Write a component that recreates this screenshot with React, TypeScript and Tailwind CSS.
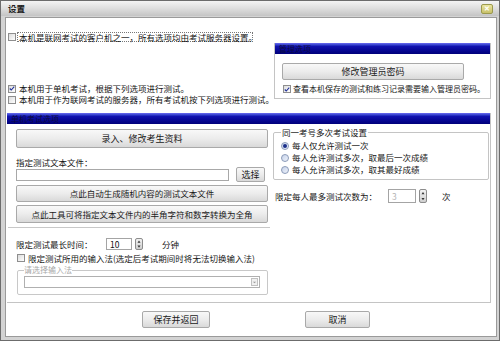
import type { ReactNode } from 'react'

const font = { fontFamily: '"Noto Sans CJK SC", "Noto Sans", sans-serif' }

function Btn({ children, className = '' }: { children: ReactNode; className?: string }) {
  return (
    <div
      className={`flex items-center justify-center whitespace-nowrap rounded-[2px] border border-[#a9a9a9] bg-gradient-to-b from-[#f8f8f8] via-[#ececec] to-[#d9d9d9] text-[#1a1a1a] ${className}`}
    >
      {children}
    </div>
  )
}

function Check({ checked = false }: { checked?: boolean }) {
  return (
    <span className="flex h-[8px] w-[8px] shrink-0 items-center justify-center border border-[#8e8e8e] bg-gradient-to-br from-[#dcdcdc] to-white">
      {checked && (
        <svg viewBox="0 0 8 8" className="h-[7px] w-[7px]">
          <path d="M1 4 L3 6 L7 1.5" stroke="#23339a" strokeWidth="1.5" fill="none" />
        </svg>
      )}
    </span>
  )
}

function Radio({ on = false }: { on?: boolean }) {
  return (
    <span className="flex h-[8px] w-[8px] shrink-0 items-center justify-center rounded-full border border-[#8a9ab8] bg-gradient-to-br from-[#c7d3ea] to-[#eef2fa]">
      {on && <span className="h-[4px] w-[4px] rounded-full bg-[#1b2f8a]" />}
    </span>
  )
}

function Header({ label }: { label: string }) {
  return (
    <div className="flex h-[11px] items-center bg-gradient-to-b from-[#6c6cf2] via-[#1212b0] via-30% to-[#00007a] pl-[4px] text-[8px] leading-none text-[#0b0b40]">
      {label}
    </div>
  )
}

function Spin({ value, disabled = false, className = '' }: { value: string; disabled?: boolean; className?: string }) {
  return (
    <div className={`flex items-center ${className}`}>
      <div
        className={`flex h-full flex-1 items-center border border-[#a4a4a4] bg-white pl-[3px] ${
          disabled ? 'text-[#b4b4b4]' : 'text-[#111]'
        }`}
      >
        {value}
      </div>
      <div className="ml-[3px] flex h-full w-[8px] flex-col overflow-hidden rounded-[2px] border border-[#8c8c8c] bg-gradient-to-b from-[#f2f2f2] to-[#cfcfcf]">
        <svg viewBox="0 0 8 6" className="h-1/2 w-full">
          <path d="M2 4.5 L4 1.5 L6 4.5 Z" fill="#333" />
        </svg>
        <svg viewBox="0 0 8 6" className="h-1/2 w-full">
          <path d="M2 1.5 L4 4.5 L6 1.5 Z" fill="#333" />
        </svg>
      </div>
    </div>
  )
}

export default function App() {
  return (
    <div
      style={font}
      className="flex h-[341px] w-[500px] flex-col overflow-hidden border border-[#6c6c6c] bg-[#d3d3d3] text-[8.5px] leading-none text-[#151515]"
    >
      {/* title bar */}
      <div className="flex h-[15px] shrink-0 items-center justify-between bg-gradient-to-b from-[#f4f4f4] via-[#dedede] to-[#c4c4c4] pl-[7px] pr-[6px]">
        <span className="text-[8.5px] font-bold text-[#202020]">设置</span>
        <span className="flex h-[10px] w-[12px] items-center justify-center rounded-[2px] border border-[#9c9a4e] bg-gradient-to-b from-[#ebe6a0] to-[#c8c16a] text-[7px] font-bold text-white">
          ✕
        </span>
      </div>

      {/* frame */}
      <div className="flex flex-1 flex-col pb-[3px] pl-[4px] pr-[2px] pt-[1px]">
        <div className="flex flex-1 flex-col border border-[#9a9a9a] bg-white">
          {/* row 1 */}
          <div className="mt-[14px] flex h-[10px] items-center pl-[2px]">
            <Check />
            <span className="ml-[1px] flex h-[10px] w-[236px] items-center whitespace-nowrap border border-dotted border-[#777] pl-[1px]">
              本机是联网考试的客户机之一，所有选项均由考试服务器设置。
            </span>
          </div>

          {/* row 2 */}
          <div className="mt-[1px] flex items-start">
            <div className="flex h-[62px] w-[266px] flex-col pl-[2px] pt-[40px]">
              <div className="flex h-[11px] items-center gap-[3px]">
                <Check checked />
                <span className="whitespace-nowrap">本机用于单机考试，根据下列选项进行测试。</span>
              </div>
              <div className="flex h-[11px] items-center gap-[3px]">
                <Check />
                <span className="whitespace-nowrap">本机用于作为联网考试的服务器，所有考试机按下列选项进行测试。</span>
              </div>
            </div>
            <div className="ml-[2px] flex h-[56px] w-[217px] flex-col border-x border-b border-[#c4c4c4]">
              <Header label="管理选项" />
              <Btn className="ml-[7px] mt-[9px] h-[17px] w-[182px] text-[9px]">修改管理员密码</Btn>
              <div className="ml-[8px] mt-[4px] flex h-[10px] items-center gap-[2px] text-[8px]">
                <Check checked />
                <span className="whitespace-nowrap">查看本机保存的测试和练习记录需要输入管理员密码。</span>
              </div>
            </div>
          </div>

          {/* big group */}
          <div className="ml-[1px] mt-[8px] flex h-[190px] w-[484px] flex-col border-b border-r border-[#c4c4c4]">
            <Header label="单机考试选项" />
            <div className="flex flex-1">
              {/* left column */}
              <div className="flex w-[263px] flex-col">
                <div className="flex flex-col pl-[9px] pr-[2px]">
                  <Btn className="mt-[5px] h-[19px] text-[9px]">录入、修改考生资料</Btn>
                  <div className="mt-[10px] flex h-[9px] items-center">指定测试文本文件：</div>
                  <div className="flex h-[15px] items-center">
                    <div className="h-[12px] w-[213px] border border-[#a8a8a8] bg-white" />
                    <Btn className="ml-[7px] h-[15px] w-[29px] text-[9px]">选择</Btn>
                  </div>
                  <Btn className="mt-[3px] h-[17px]">点此自动生成随机内容的测试文本文件</Btn>
                  <Btn className="mt-[3px] h-[18px]">点此工具可将指定文本文件内的半角字符和数字转换为全角</Btn>
                </div>
                <div className="ml-[1px] mt-[4px] h-px bg-[#c8c8c8]" />
                <div className="mt-[10px] flex h-[12px] items-center pl-[9px]">
                  <span className="w-[90px]">限定测试最长时间：</span>
                  <Spin value="10" className="h-[12px] w-[37px]" />
                  <span className="ml-[19px]">分钟</span>
                </div>
                <div className="mt-[3px] flex h-[10px] items-center gap-[3px] pl-[10px]">
                  <Check />
                  <span className="whitespace-nowrap">限定测试所用的输入法(选定后考试期间时将无法切换输入法)</span>
                </div>
                <fieldset className="ml-[10px] mt-[3px] w-[251px] rounded-[2px] border border-[#c8c8c8] pb-[6px] pl-[6px] pr-[7px]">
                  <legend className="text-[8px] text-[#a8a8a8]">请选择输入法</legend>
                  <div className="mt-[2px] flex h-[12px] items-center justify-end border border-[#b0b0b0] bg-white pr-[1px]">
                    <span className="flex h-[8px] w-[7px] items-center justify-center border border-[#c0c0c0] bg-[#f0f0f0]">
                      <svg viewBox="0 0 6 6" className="h-[5px] w-[5px]">
                        <path d="M1 2 L3 4 L5 2 Z" fill="#999" />
                      </svg>
                    </span>
                  </div>
                </fieldset>
              </div>

              {/* right column */}
              <div className="ml-[3px] flex flex-1 flex-col">
                <fieldset className="mr-[1px] mt-[4px] h-[52px] rounded-[2px] border border-[#c4c4c4] pl-[7px]">
                  <legend className="px-[1px] text-[8.5px]">同一考号多次考试设置</legend>
                  <div className="mt-[3px] flex h-[12px] items-center gap-[3px]">
                    <Radio on />
                    <span>每人仅允许测试一次</span>
                  </div>
                  <div className="flex h-[12px] items-center gap-[3px]">
                    <Radio />
                    <span>每人允许测试多次，取最后一次成绩</span>
                  </div>
                  <div className="flex h-[12px] items-center gap-[3px]">
                    <Radio />
                    <span>每人允许测试多次，取其最好成绩</span>
                  </div>
                </fieldset>
                <div className="mt-[9px] flex h-[14px] items-center pl-[2px]">
                  <span className="w-[113px]">限定每人最多测试次数为：</span>
                  <Spin value="3" disabled className="h-[14px] w-[39px]" />
                  <span className="ml-[15px]">次</span>
                </div>
              </div>
            </div>
          </div>

          {/* bottom buttons */}
          <div className="mt-[8px] flex pl-[136px]">
            <Btn className="h-[17px] w-[68px] text-[9px]">保存并返回</Btn>
            <Btn className="ml-[95px] h-[17px] w-[65px] text-[9px]">取消</Btn>
          </div>
        </div>
      </div>
    </div>
  )
}
